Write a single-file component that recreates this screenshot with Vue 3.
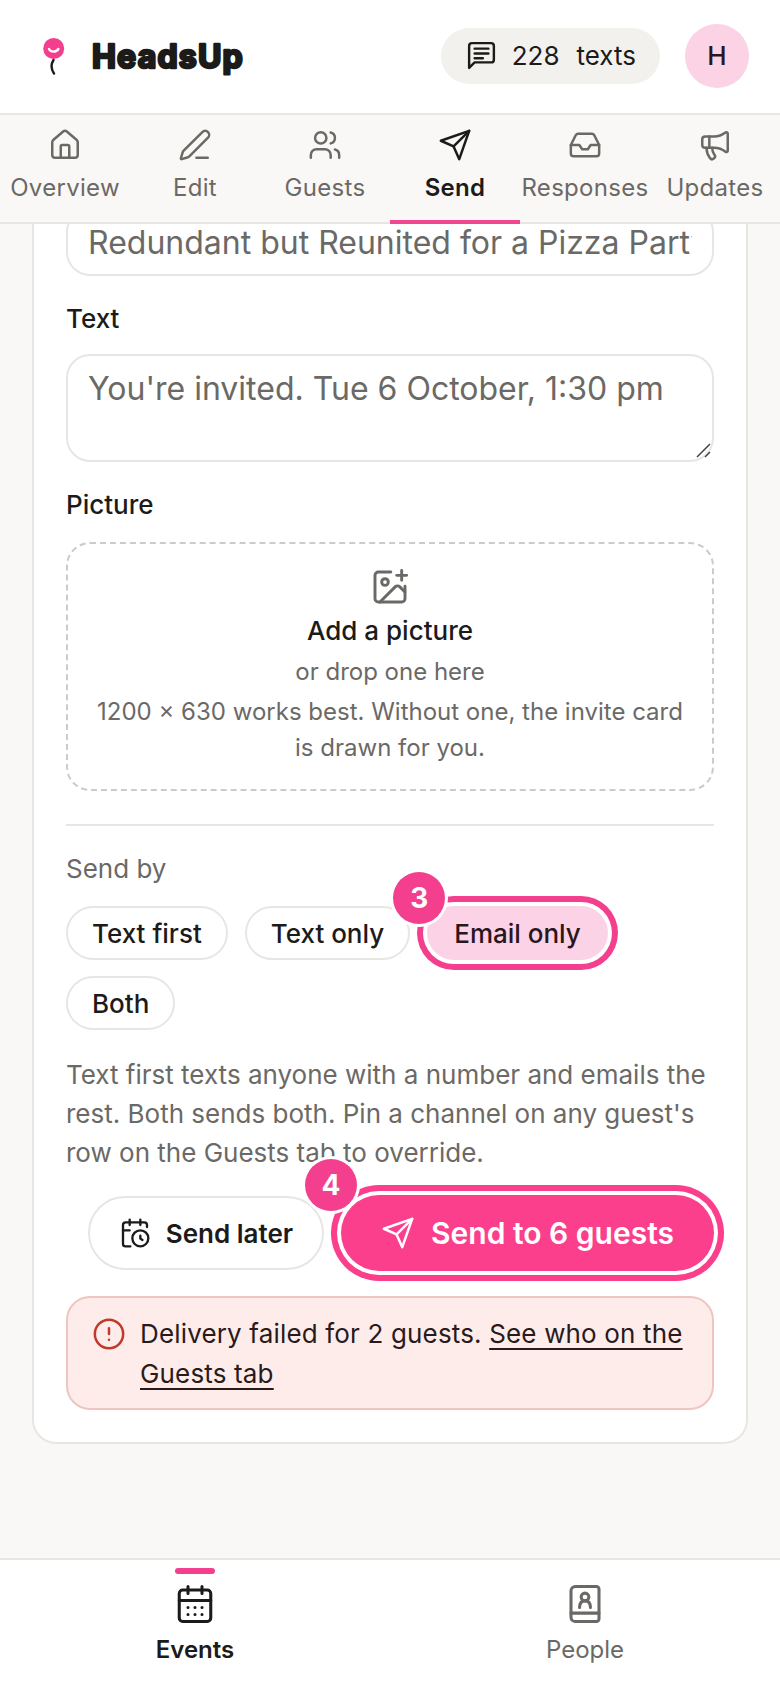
<script setup>
const tabs = [
  { label: 'Overview', paths: ['M15 21v-8a1 1 0 0 0-1-1h-4a1 1 0 0 0-1 1v8', 'M3 10a2 2 0 0 1 .709-1.528l7-5.999a2 2 0 0 1 2.582 0l7 5.999A2 2 0 0 1 21 10v9a2 2 0 0 1-2 2H5a2 2 0 0 1-2-2z'] },
  { label: 'Edit', paths: ['M13 21h8', 'M21.174 6.812a1 1 0 0 0-3.986-3.987L3.842 16.174a2 2 0 0 0-.5.83l-1.321 4.352a.5.5 0 0 0 .623.622l4.353-1.32a2 2 0 0 0 .83-.497z'] },
  { label: 'Guests', paths: ['M16 21v-2a4 4 0 0 0-4-4H6a4 4 0 0 0-4 4v2', 'M5 7a4 4 0 1 0 8 0a4 4 0 1 0-8 0', 'M22 21v-2a4 4 0 0 0-3-3.87', 'M16 3.13a4 4 0 0 1 0 7.75'] },
  { label: 'Send', active: true, paths: ['m22 2-7 20-4-9-9-4Z', 'M22 2 11 13'] },
  { label: 'Responses', paths: ['M22 12h-6l-2 3h-4l-2-3H2', 'M5.45 5.11 2 12v6a2 2 0 0 0 2 2h16a2 2 0 0 0 2-2v-6l-3.45-6.89A2 2 0 0 0 16.76 4H7.24a2 2 0 0 0-1.79 1.11z'] },
  { label: 'Updates', paths: ['M11 6a13 13 0 0 0 8.4-2.8A1 1 0 0 1 21 4v12a1 1 0 0 1-1.6.8A13 13 0 0 0 11 14H5a2 2 0 0 1-2-2V8a2 2 0 0 1 2-2z', 'M6 14a12 12 0 0 0 2.4 7.2 2 2 0 0 0 3.2-2.4A8 8 0 0 1 10 14', 'M8 6v8'] },
]

const sendPaths = ['m22 2-7 20-4-9-9-4Z', 'M22 2 11 13']
</script>

<template>
  <div class="app">
    <header class="top">
      <div class="brand">
        <svg class="balloon" width="24" height="38" viewBox="0 0 24 38" fill="none">
          <circle cx="11.7" cy="11.5" r="10.5" fill="#f43f8e" />
          <path d="M7 12c2 3.5 7 3.5 9.4 0" stroke="#fff" stroke-width="2.4" stroke-linecap="round" />
          <path d="M11.5 23c-2.5 4-2.5 9 .5 13.5" stroke="#1c1b1a" stroke-width="2.4" stroke-linecap="round" />
        </svg>
        <svg class="wordmark" width="156" height="44" viewBox="0 0 156 44">
          <text x="1" y="34">HeadsUp</text>
        </svg>
      </div>
      <div class="top-right">
        <div class="credits">
          <svg class="icon credits-icon" viewBox="0 0 24 24">
            <path d="M21 15a2 2 0 0 1-2 2H7l-4 4V5a2 2 0 0 1 2-2h14a2 2 0 0 1 2 2z" />
            <path d="M7 7h10M7 10.5h10M7 14h6" />
          </svg>
          <span>228</span>
          <span class="credits-word">texts</span>
        </div>
        <div class="avatar">H</div>
      </div>
    </header>

    <nav class="tabs">
      <div v-for="t in tabs" :key="t.label" class="tab" :class="{ active: t.active }">
        <svg class="icon tab-icon" viewBox="0 0 24 24">
          <path v-for="d in t.paths" :key="d" :d="d" />
        </svg>
        <span>{{ t.label }}</span>
      </div>
    </nav>

    <main class="scroll">
      <section class="card">
        <input class="field" type="text" value="Redundant but Reunited for a Pizza Party" />

        <label class="label text-label">Text</label>
        <div class="area-wrap">
          <textarea class="field area" placeholder="You're invited. Tue 6 October, 1:30 pm"></textarea>
          <svg class="grip" width="16" height="16" viewBox="0 0 16 16">
            <path d="M2 14 15 1M10 14l5-5" />
          </svg>
        </div>

        <label class="label picture-label">Picture</label>
        <div class="drop">
          <svg class="icon drop-icon" viewBox="0 0 24 24">
            <path d="M16 5h6M19 2v6" />
            <path d="M21 11.5V19a2 2 0 0 1-2 2H5a2 2 0 0 1-2-2V5a2 2 0 0 1 2-2h7.5" />
            <path d="m21 15-3.086-3.086a2 2 0 0 0-2.828 0L6 21" />
            <path d="M7 9a2 2 0 1 0 4 0a2 2 0 1 0-4 0" />
          </svg>
          <div class="drop-title">Add a picture</div>
          <div class="drop-sub">or drop one here</div>
          <div class="drop-hint">1200 × 630 works best. Without one, the invite card is drawn for you.</div>
        </div>

        <div class="divider"></div>

        <div class="send-by">Send by</div>
        <div class="chips">
          <button class="chip">Text first</button>
          <button class="chip">Text only</button>
          <button class="chip chip-on">
            <span class="step">3</span>
            Email only
          </button>
          <button class="chip">Both</button>
        </div>

        <p class="help">Text first texts anyone with a number and emails the rest. Both sends both. Pin a channel on any guest's row on the Guests tab to override.</p>

        <div class="actions">
          <button class="later">
            <svg class="icon later-icon" viewBox="0 0 24 24">
              <path d="M16 14v2.2l1.6 1M16 2v4M8 2v4M3 10h5" />
              <path d="M21 7.5V6a2 2 0 0 0-2-2H5a2 2 0 0 0-2 2v14a2 2 0 0 0 2 2h3.5" />
              <path d="M10 16a6 6 0 1 0 12 0a6 6 0 1 0-12 0" />
            </svg>
            Send later
          </button>
          <button class="send">
            <span class="step">4</span>
            <svg class="icon send-icon" viewBox="0 0 24 24">
              <path v-for="d in sendPaths" :key="d" :d="d" />
            </svg>
            Send to 6 guests
          </button>
        </div>

        <div class="alert">
          <svg class="icon alert-icon" viewBox="0 0 24 24">
            <path d="M2 12a10 10 0 1 0 20 0a10 10 0 1 0-20 0" />
            <path d="M12 8v4M12 16h.01" />
          </svg>
          <p>Delivery failed for 2 guests. <a>See who on the Guests tab</a></p>
        </div>
      </section>
    </main>

    <nav class="bottom">
      <div class="bottom-item active">
        <span class="pip"></span>
        <svg class="icon bottom-icon" viewBox="0 0 24 24">
          <path d="M8 2v4M16 2v4M3 10h18" />
          <path d="M5 4h14a2 2 0 0 1 2 2v14a2 2 0 0 1-2 2H5a2 2 0 0 1-2-2V6a2 2 0 0 1 2-2z" />
          <path d="M8 14h.01M12 14h.01M16 14h.01M8 18h.01M12 18h.01M16 18h.01" />
        </svg>
        <span>Events</span>
      </div>
      <div class="bottom-item">
        <span class="pip pip-off"></span>
        <svg class="icon bottom-icon" viewBox="0 0 24 24">
          <path d="M4 19.5v-15A2.5 2.5 0 0 1 6.5 2h12A1.5 1.5 0 0 1 20 3.5v17a1.5 1.5 0 0 1-1.5 1.5h-12A2.5 2.5 0 0 1 4 19.5z" />
          <path d="M4 17.2h16" />
          <path d="M9.8 8a2.2 2.2 0 1 0 4.4 0a2.2 2.2 0 1 0-4.4 0" />
          <path d="M8.9 14c0-2.6 1-3.8 3.1-3.8s3.100 1.200 3.100 3.800" />
        </svg>
        <span>People</span>
      </div>
    </nav>
  </div>
</template>

<style scoped>
.app {
  width: 780px;
  height: 1688px;
  display: flex;
  flex-direction: column;
  overflow: hidden;
  background: #faf8f6;
  color: #1c1b1a;
  font-family: Inter, "Liberation Sans", sans-serif;
}

.icon {
  fill: none;
  stroke: currentColor;
  stroke-width: 1.75;
  stroke-linecap: round;
  stroke-linejoin: round;
  flex: none;
}

.top {
  height: 113px;
  flex: none;
  box-sizing: border-box;
  display: flex;
  align-items: center;
  justify-content: space-between;
  padding: 0 31px 2px 42px;
  background: #fff;
}

.brand {
  display: flex;
  align-items: center;
  gap: 25px;
}

.wordmark text {
  font: 700 32px Inter, "Liberation Sans", sans-serif;
  letter-spacing: 1.2px;
  fill: #1c1b1a;
  stroke: #1c1b1a;
  stroke-width: 2.6px;
  stroke-linejoin: round;
}

.top-right {
  display: flex;
  align-items: center;
  gap: 25px;
}

.credits {
  height: 56px;
  display: flex;
  align-items: center;
  gap: 14px;
  padding: 0 24px;
  border-radius: 28px;
  background: #f3f1ed;
  font-size: 26px;
}

.credits-icon {
  width: 33px;
  height: 33px;
}

.credits-word {
  margin-left: 3px;
}

.avatar {
  width: 64px;
  height: 64px;
  border-radius: 50%;
  background: #fbd3e5;
  display: flex;
  align-items: center;
  justify-content: center;
  font-size: 26px;
  font-weight: 500;
  color: #2b1520;
}

.tabs {
  flex: none;
  display: grid;
  grid-template-columns: repeat(6, 130px);
  height: 111px;
  box-sizing: border-box;
  border-top: 2px solid #e8e6e2;
  border-bottom: 2px solid #e8e6e2;
  position: relative;
  z-index: 1;
  background: #faf8f6;
}

.tab {
  display: flex;
  flex-direction: column;
  align-items: center;
  padding-top: 13px;
  color: #6b6966;
  font-size: 24px;
  line-height: 32px;
  letter-spacing: 0.3px;
  position: relative;
  white-space: nowrap;
}

.tab-icon {
  width: 34px;
  height: 34px;
  margin-bottom: 10px;
}

.tab.active {
  color: #1c1b1a;
  font-weight: 600;
}

.tab.active::after {
  content: '';
  position: absolute;
  left: 0;
  right: 0;
  bottom: -2px;
  height: 4px;
  background: #f0478f;
}

.scroll {
  flex: 1;
  min-height: 0;
  overflow: hidden;
}

.card {
  margin: -49px 32px 0;
  padding: 31px 32px 32px;
  background: #fff;
  border: 2px solid #e8e6e2;
  border-radius: 24px;
}

.field {
  display: block;
  width: 100%;
  height: 68px;
  box-sizing: border-box;
  padding: 0 20px;
  border: 2px solid #e8e6e2;
  border-radius: 24px;
  background: #fff;
  color: #6b6966;
  font: 400 32px Inter, "Liberation Sans", sans-serif;
  outline: none;
}

.area-wrap {
  position: relative;
}

.area {
  height: 108px;
  padding: 13px 20px;
  line-height: 40px;
  resize: none;
}

.area::placeholder {
  color: #6b6966;
  opacity: 1;
}

.grip {
  position: absolute;
  right: 3px;
  bottom: 3px;
  fill: none;
  stroke: #444;
  stroke-width: 1.5;
}

.label {
  display: block;
  font-size: 26px;
  line-height: 36px;
  font-weight: 450;
}

.text-label {
  margin: 25px 0 17px;
}

.picture-label {
  margin: 25px 0 19px;
}

.drop {
  height: 249px;
  box-sizing: border-box;
  padding: 23px 24px 0;
  border: 2px dashed #cdcbc7;
  border-radius: 24px;
  display: flex;
  flex-direction: column;
  align-items: center;
  text-align: center;
  color: #6b6966;
  font-size: 24px;
  line-height: 36px;
}

.drop-icon {
  width: 40px;
  height: 40px;
  margin-bottom: 5px;
}

.drop-title {
  color: #1c1b1a;
  font-size: 26px;
  font-weight: 450;
  line-height: 38px;
  margin-bottom: 4px;
}

.drop-sub {
  margin-bottom: 4px;
}

.divider {
  height: 2px;
  background: #e8e6e2;
  margin-top: 33px;
}

.send-by {
  margin: 25px 0 19px;
  font-size: 26px;
  line-height: 36px;
  color: #6b6966;
}

.chips {
  display: flex;
  flex-wrap: wrap;
  gap: 16px 17px;
}

.chip {
  position: relative;
  height: 54px;
  box-sizing: border-box;
  padding: 0 24px;
  border: 2px solid #e8e6e2;
  border-radius: 27px;
  background: #fff;
  color: #1c1b1a;
  font: 450 26px Inter, "Liberation Sans", sans-serif;
}

.chip-on {
  padding: 0 25px;
  background: #fcd3e6;
  border-color: #fcd3e6;
  color: #2b1520;
  font-weight: 500;
  box-shadow: 0 0 0 4px #fff, 0 0 0 10px #f43f8e;
}

.step {
  position: absolute;
  top: -36px;
  left: -36px;
  width: 52px;
  height: 52px;
  border-radius: 50%;
  background: #f43f8e;
  color: #fff;
  box-shadow: 0 0 0 3px #fff;
  display: flex;
  align-items: center;
  justify-content: center;
  font: 700 28px Inter, "Liberation Sans", sans-serif;
  z-index: 2;
}

.help {
  margin: 25px 0 0;
  font-size: 26px;
  line-height: 39px;
  color: #6b6966;
}

.actions {
  display: flex;
  justify-content: flex-end;
  align-items: center;
  gap: 17px;
  margin-top: 23px;
}

.later {
  height: 74px;
  width: 236px;
  flex: none;
  border: 2px solid #e8e6e2;
  border-radius: 37px;
  background: #fff;
  color: #1c1b1a;
  display: flex;
  align-items: center;
  justify-content: center;
  gap: 15px;
  font: 600 26px Inter, "Liberation Sans", sans-serif;
}

.later-icon {
  width: 32px;
  height: 32px;
}

.send {
  position: relative;
  width: 373px;
  height: 76px;
  flex: none;
  border: 0;
  border-radius: 38px;
  background: #fb3f8c;
  color: #fff;
  display: flex;
  align-items: center;
  justify-content: center;
  gap: 16px;
  font: 600 30px Inter, "Liberation Sans", sans-serif;
  box-shadow: 0 0 0 4px #fff, 0 0 0 10px #fb3f8c;
}

.send-icon {
  width: 34px;
  height: 34px;
}

.alert {
  margin-top: 25px;
  padding: 16px 24px 14px;
  border: 2px solid #eec5c0;
  border-radius: 24px;
  background: #fdecea;
  display: flex;
  gap: 14px;
  color: #2a1a1a;
  font-size: 26px;
  line-height: 40px;
  letter-spacing: 0.16px;
}

.alert p {
  margin: 0;
}

.alert a {
  text-decoration: underline;
  text-underline-offset: 5px;
}

.alert-icon {
  width: 34px;
  height: 34px;
  margin-top: 3px;
  color: #c0392b;
}

.bottom {
  height: 130px;
  flex: none;
  box-sizing: border-box;
  border-top: 2px solid #e8e6e2;
  background: #fff;
  display: grid;
  grid-template-columns: 1fr 1fr;
}

.bottom-item {
  display: flex;
  flex-direction: column;
  align-items: center;
  padding-top: 8px;
  color: #6b6966;
  font-size: 24px;
  line-height: 32px;
}

.bottom-item.active {
  color: #1c1b1a;
  font-weight: 600;
}

.pip {
  width: 40px;
  height: 6px;
  border-radius: 3px;
  background: #f43f8e;
  margin-bottom: 9px;
}

.pip-off {
  background: transparent;
}

.bottom-icon {
  width: 42px;
  height: 42px;
  margin-bottom: 9px;
}
</style>
